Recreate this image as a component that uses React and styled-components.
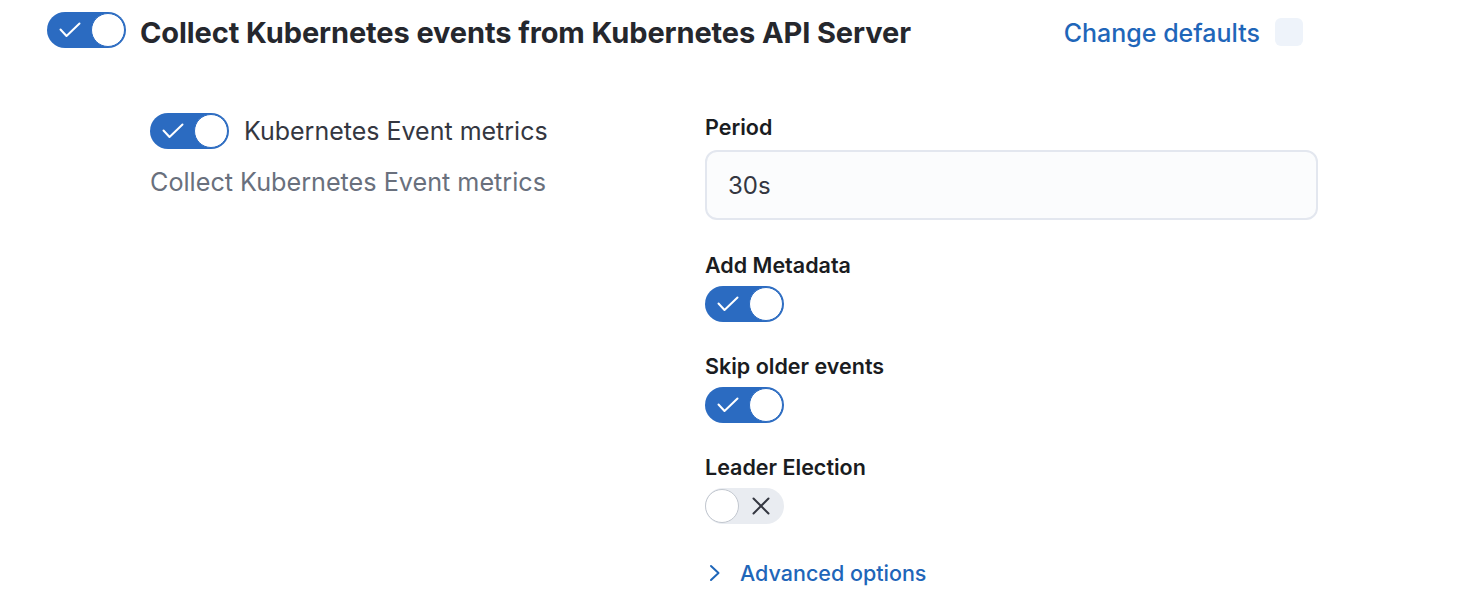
import styled, { createGlobalStyle } from "styled-components";

const GlobalStyle = createGlobalStyle`
  html, body {
    margin: 0;
    padding: 0;
    background: #ffffff;
    font-family: Inter, "Noto Sans", sans-serif;
  }
`;

const CheckIcon = () => (
  <svg width="22" height="16" viewBox="0 0 22 16" fill="none">
    <path
      d="M1.5 7.5 L7.5 14 L20.5 1.5"
      stroke="#ffffff"
      strokeWidth="2"
      strokeLinecap="round"
      strokeLinejoin="round"
    />
  </svg>
);

const CrossIcon = () => (
  <svg width="18" height="18" viewBox="0 0 18 18" fill="none">
    <path
      d="M1.5 1.5 L16.5 16.5 M16.5 1.5 L1.5 16.5"
      stroke="#343741"
      strokeWidth="2"
      strokeLinecap="round"
    />
  </svg>
);

const Chevron = () => (
  <svg width="12" height="18" viewBox="0 0 12 18" fill="none">
    <path
      d="M2 2 L9.5 9 L2 16"
      stroke="#1f66b9"
      strokeWidth="2"
      strokeLinecap="round"
      strokeLinejoin="round"
    />
  </svg>
);

const Toggle = ({ on }) => (
  <Track $on={on}>
    <IconSlot $on={on}>{on ? <CheckIcon /> : <CrossIcon />}</IconSlot>
    <Knob $on={on} />
  </Track>
);

const FormRow = ({ label, children }) => (
  <Row>
    <Label>{label}</Label>
    {children}
  </Row>
);

const App = () => (
  <>
    <GlobalStyle />
    <Page>
      <Header>
        <Toggle on />
        <Title>Collect Kubernetes events from Kubernetes API Server</Title>
        <Spacer />
        <LinkText>Change defaults</LinkText>
        <Square />
      </Header>

      <Body>
        <LeftCol>
          <ToggleLine>
            <Toggle on />
            <ToggleLabel>Kubernetes Event metrics</ToggleLabel>
          </ToggleLine>
          <Description>Collect Kubernetes Event metrics</Description>
        </LeftCol>

        <RightCol>
          <FormRow label="Period">
            <Input>30s</Input>
          </FormRow>
          <FormRow label="Add Metadata">
            <Toggle on />
          </FormRow>
          <FormRow label="Skip older events">
            <Toggle on />
          </FormRow>
          <FormRow label="Leader Election">
            <Toggle on={false} />
          </FormRow>
          <Advanced>
            <Chevron />
            <span>Advanced options</span>
          </Advanced>
        </RightCol>
      </Body>
    </Page>
  </>
);

export default App;

const Page = styled.div`
  padding: 12px 0 0 47px;
`;

const Header = styled.div`
  width: 1256px;
  display: flex;
  align-items: center;
  height: 36px;
`;

const Title = styled.h2`
  margin: 0 0 0 14px;
  font-size: 29px;
  font-weight: 700;
  line-height: 36px;
  color: #25272d;
  letter-spacing: -0.1px;
  padding-top: 6px;
`;

const Spacer = styled.div`
  flex: 1;
`;

const LinkText = styled.span`
  font-size: 25px;
  font-weight: 500;
  color: #1f66b9;
  line-height: 36px;
  padding-top: 6px;
`;

const Square = styled.div`
  width: 28px;
  height: 28px;
  margin-left: 15px;
  margin-top: 3px;
  border-radius: 6px;
  background: #eef3fa;
`;

const Track = styled.div`
  position: relative;
  flex: none;
  width: 79px;
  height: 36px;
  border-radius: 18px;
  background: ${(p) => (p.$on ? "#2b6bc1" : "#e9ecf1")};
`;

const IconSlot = styled.div`
  position: absolute;
  top: 0;
  bottom: 0;
  display: flex;
  align-items: center;
  ${(p) => (p.$on ? "left: 12px;" : "left: 47px;")}
`;

const Knob = styled.div`
  position: absolute;
  top: 1px;
  width: 32px;
  height: 32px;
  border-radius: 50%;
  background: #ffffff;
  border: 1px solid ${(p) => (p.$on ? "#2b6bc1" : "#c2c7cf")};
  ${(p) => (p.$on ? "right: 1px;" : "left: 0px;")}
`;

const Body = styled.div`
  display: flex;
  margin-top: 65px;
  padding-left: 103px;
`;

const LeftCol = styled.div`
  width: 555px;
`;

const ToggleLine = styled.div`
  display: flex;
  align-items: center;
  gap: 15px;
`;

const ToggleLabel = styled.span`
  font-size: 25px;
  color: #343741;
  line-height: 36px;
`;

const Description = styled.div`
  margin-top: 17px;
  font-size: 25.2px;
  line-height: 32px;
  color: #69707d;
`;

const RightCol = styled.div`
  width: 613px;
  display: flex;
  flex-direction: column;
  gap: 32px;
  padding-top: 2px;
`;

const Row = styled.div`
  display: flex;
  flex-direction: column;
  align-items: flex-start;
  gap: 9px;
`;

const Label = styled.label`
  font-size: 21.5px;
  font-weight: 600;
  line-height: 24px;
  color: #1a1c21;
`;

const Input = styled.div`
  box-sizing: border-box;
  width: 613px;
  height: 70px;
  margin: 2px 0 1px;
  padding: 0 21px;
  display: flex;
  align-items: center;
  font-size: 24px;
  color: #343741;
  background: #fbfcfd;
  border: 2px solid #e3e7ef;
  border-radius: 12px;
`;

const Advanced = styled.div`
  display: flex;
  align-items: center;
  gap: 19px;
  padding-left: 4px;
  margin-top: 3px;
  font-size: 21.5px;
  font-weight: 500;
  line-height: 28px;
  color: #1f66b9;
`;
